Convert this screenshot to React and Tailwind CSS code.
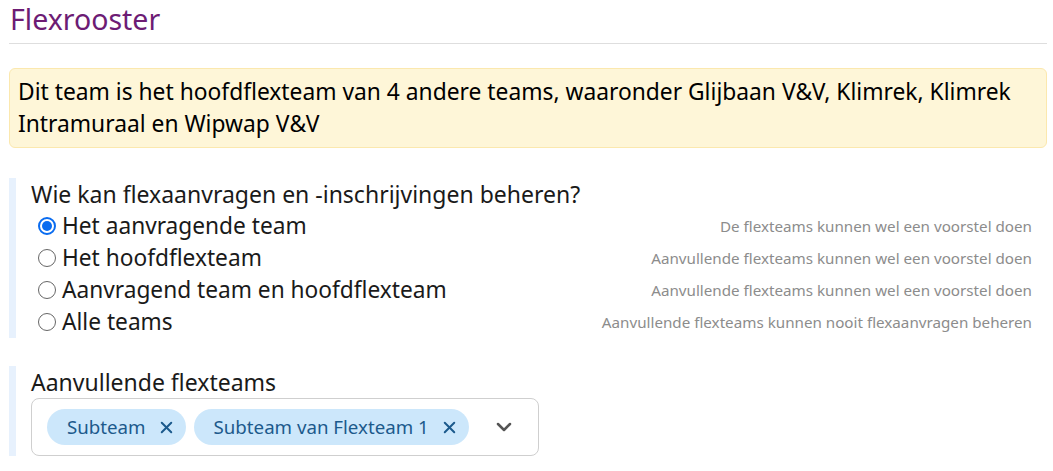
import { X, ChevronDown } from 'lucide-react';

const options = [
  { label: 'Het aanvragende team', hint: 'De flexteams kunnen wel een voorstel doen', checked: true },
  { label: 'Het hoofdflexteam', hint: 'Aanvullende flexteams kunnen wel een voorstel doen' },
  { label: 'Aanvragend team en hoofdflexteam', hint: 'Aanvullende flexteams kunnen wel een voorstel doen' },
  { label: 'Alle teams', hint: 'Aanvullende flexteams kunnen nooit flexaanvragen beheren' },
];

const Radio = ({ checked }) =>
  checked ? (
    <span className="flex h-[18px] w-[18px] shrink-0 items-center justify-center rounded-full border-2 border-[#0a6cf0] bg-white">
      <span className="h-[10px] w-[10px] rounded-full bg-[#0a6cf0]" />
    </span>
  ) : (
    <span className="h-[18px] w-[18px] shrink-0 rounded-full border border-[#666] bg-white" />
  );

const Chip = ({ label }) => (
  <span className="flex h-[36px] items-center gap-[11px] rounded-full bg-[#cce7fb] pl-[20px] pr-[10px] text-[18.7px] text-[#1c5a8c]">
    {label}
    <X size={19} strokeWidth={2.5} className="text-[#1c5a8c]" />
  </span>
);

export default function App() {
  return (
    <div
      className="min-h-screen bg-white pl-[9px] pr-[6px] text-[#1a1a1a]"
      style={{ fontFamily: '"Noto Sans", sans-serif' }}
    >
      <h1 className="border-b border-[#dedede] pl-px pt-[2px] pb-[6px] text-[28.5px] leading-[35px] text-[#6d1c74]">
        Flexrooster
      </h1>

      <div className="mt-[24px] rounded-[6px] border border-[#fbe8ae] bg-[#fef6d8] px-[8px] py-[7px] text-[22.8px] leading-[32px] text-black">
        Dit team is het hoofdflexteam van 4 andere teams, waaronder Glijbaan V&amp;V, Klimrek, Klimrek Intramuraal en Wipwap V&amp;V
      </div>

      <div className="mt-[30px] border-l-[7px] border-[#e7f1fd] pl-[15px]">
        <div className="text-[23px] leading-[32px]">Wie kan flexaanvragen en -inschrijvingen beheren?</div>
        <div className="flex flex-col">
          {options.map((o) => (
            <div key={o.label} className="flex h-[32px] items-center justify-between pl-[7px] pr-[15px]">
              <div className="flex items-center gap-[6px] text-[22.7px]">
                <Radio checked={o.checked} />
                {o.label}
              </div>
              <span className="text-[15.2px] text-[#8c8c8c]">{o.hint}</span>
            </div>
          ))}
        </div>
      </div>

      <div className="mt-[28px] border-l-[7px] border-[#e7f1fd] pl-[15px]">
        <div className="text-[23px] leading-[32px]">Aanvullende flexteams</div>
        <div className="flex h-[58px] w-[508px] items-center gap-[8px] rounded-[8px] border border-[#cfcfcf] pl-[15px]">
          <Chip label="Subteam" />
          <Chip label="Subteam van Flexteam 1" />
          <ChevronDown size={24} strokeWidth={2.5} className="ml-[15px] text-[#555]" />
        </div>
      </div>
    </div>
  );
}
